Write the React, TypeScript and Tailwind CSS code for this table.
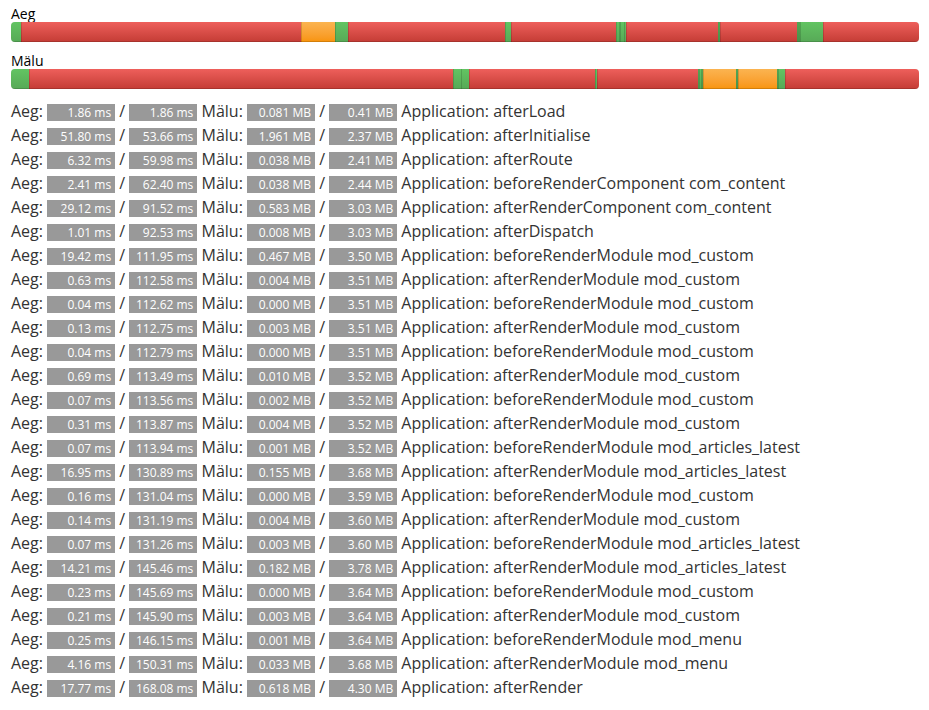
import React from "react";

type Row = [string, string, string, string, string];

const rows: Row[] = [
  ["1.86", "1.86", "0.081", "0.41", "afterLoad"],
  ["51.80", "53.66", "1.961", "2.37", "afterInitialise"],
  ["6.32", "59.98", "0.038", "2.41", "afterRoute"],
  ["2.41", "62.40", "0.038", "2.44", "beforeRenderComponent com_content"],
  ["29.12", "91.52", "0.583", "3.03", "afterRenderComponent com_content"],
  ["1.01", "92.53", "0.008", "3.03", "afterDispatch"],
  ["19.42", "111.95", "0.467", "3.50", "beforeRenderModule mod_custom"],
  ["0.63", "112.58", "0.004", "3.51", "afterRenderModule mod_custom"],
  ["0.04", "112.62", "0.000", "3.51", "beforeRenderModule mod_custom"],
  ["0.13", "112.75", "0.003", "3.51", "afterRenderModule mod_custom"],
  ["0.04", "112.79", "0.000", "3.51", "beforeRenderModule mod_custom"],
  ["0.69", "113.49", "0.010", "3.52", "afterRenderModule mod_custom"],
  ["0.07", "113.56", "0.002", "3.52", "beforeRenderModule mod_custom"],
  ["0.31", "113.87", "0.004", "3.52", "afterRenderModule mod_custom"],
  ["0.07", "113.94", "0.001", "3.52", "beforeRenderModule mod_articles_latest"],
  ["16.95", "130.89", "0.155", "3.68", "afterRenderModule mod_articles_latest"],
  ["0.16", "131.04", "0.000", "3.59", "beforeRenderModule mod_custom"],
  ["0.14", "131.19", "0.004", "3.60", "afterRenderModule mod_custom"],
  ["0.07", "131.26", "0.003", "3.60", "beforeRenderModule mod_articles_latest"],
  ["14.21", "145.46", "0.182", "3.78", "afterRenderModule mod_articles_latest"],
  ["0.23", "145.69", "0.000", "3.64", "beforeRenderModule mod_custom"],
  ["0.21", "145.90", "0.003", "3.64", "afterRenderModule mod_custom"],
  ["0.25", "146.15", "0.001", "3.64", "beforeRenderModule mod_menu"],
  ["4.16", "150.31", "0.033", "3.68", "afterRenderModule mod_menu"],
  ["17.77", "168.08", "0.618", "4.30", "afterRender"],
];

function Bar({ values }: { values: number[] }) {
  const total = values.reduce((a, b) => a + b, 0);
  const avg = total / values.length;
  return (
    <div className="flex h-[20px] w-[908px] overflow-hidden rounded-[4px] bg-[#f5f5f5] shadow-[inset_0_1px_2px_rgba(0,0,0,0.1)]">
      {values.map((v, i) => {
        let cls = "bg-gradient-to-b from-[#fbb450] to-[#f89406]";
        if (v > avg * 1.5) cls = "bg-gradient-to-b from-[#ee5f5b] to-[#c43c35]";
        else if (v < avg / 1.5) cls = "bg-gradient-to-b from-[#62c462] to-[#57a957]";
        const shadow =
          i === 0
            ? "shadow-[inset_0_-1px_0_rgba(0,0,0,0.15)]"
            : "shadow-[inset_1px_0_0_rgba(0,0,0,0.15),inset_0_-1px_0_rgba(0,0,0,0.15)]";
        return (
          <div
            key={i}
            className={`h-full shrink-0 ${cls} ${shadow}`}
            style={{ width: `${(v / total) * 100}%` }}
          />
        );
      })}
    </div>
  );
}

function Badge({ children }: { children: React.ReactNode }) {
  return (
    <span className="inline-block w-[68px] bg-[#999999] px-[4px] py-[2px] text-right align-baseline text-[12px] leading-[13px] text-white">
      {children}
    </span>
  );
}

export default function App() {
  const times = rows.map((r) => parseFloat(r[0]));
  const mems = rows.map((r) => parseFloat(r[2]));
  return (
    <div
      className="min-h-[710px] bg-white pl-[11px] pt-[5px] text-[#333333]"
      style={{ fontFamily: '"Open Sans", "Noto Sans", sans-serif' }}
    >
      <div className="text-[14px] leading-[17px] text-black">Aeg</div>
      <Bar values={times} />
      <div className="mt-[10px] text-[14px] leading-[17px] text-black">Mälu</div>
      <Bar values={mems} />
      <div className="mt-[10px]">
        {rows.map((r, i) => (
          <div key={i} className="whitespace-nowrap text-[16px] leading-[24px]">
            Aeg: <Badge>{r[0]} ms</Badge> / <Badge>{r[1]} ms</Badge> Mälu:{" "}
            <Badge>{r[2]} MB</Badge> / <Badge>{r[3]} MB</Badge> Application: {r[4]}
          </div>
        ))}
      </div>
    </div>
  );
}
